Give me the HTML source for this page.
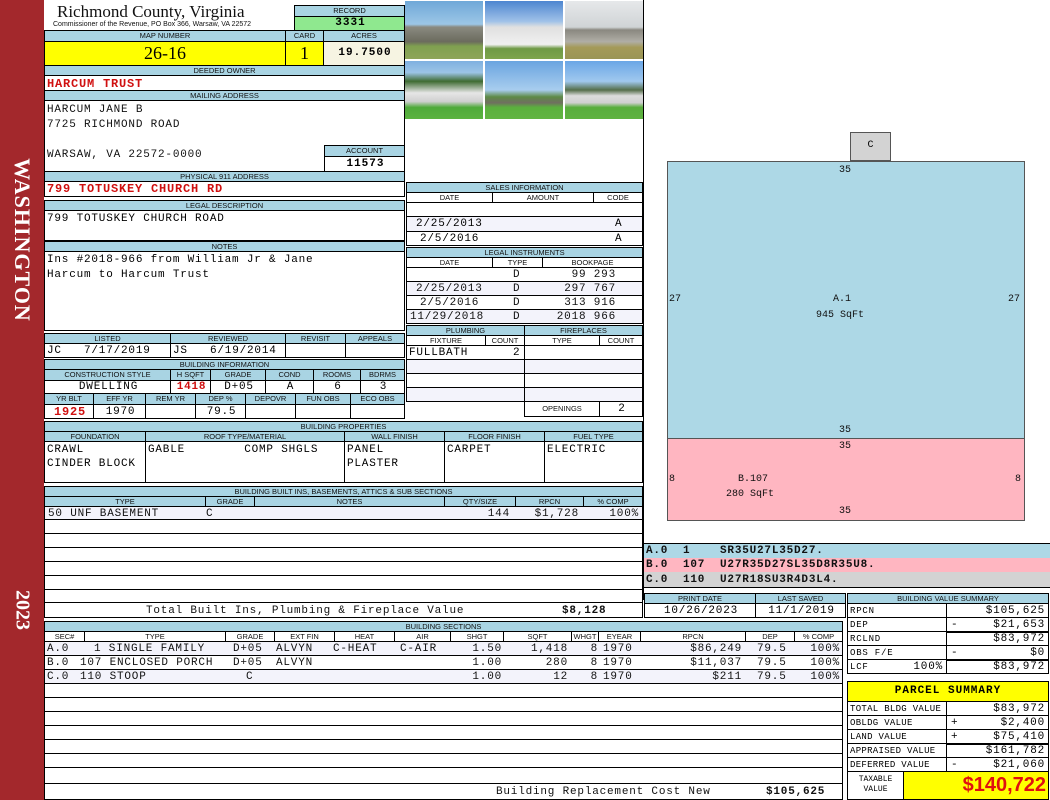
<!DOCTYPE html>
<html><head><meta charset="utf-8"><style>
*{margin:0;padding:0}
body{width:1050px;height:800px;background:#fff;position:relative;overflow:hidden;font-family:"Liberation Mono",monospace}
.c{position:absolute;box-sizing:border-box;border:1px solid #000;overflow:hidden;white-space:nowrap}
.h{background:#a9d4e3;font-family:"Liberation Sans",sans-serif;font-size:7.5px;text-align:center;line-height:9px;color:#111;letter-spacing:0}
.t{position:absolute;white-space:nowrap;font-size:11px;line-height:14px;color:#111;letter-spacing:0.8px}
.m{font-family:"Liberation Mono",monospace;font-size:11px;line-height:14px;padding-left:2px;letter-spacing:0.8px}
.r{color:#d01010;font-weight:bold}
.ctr{text-align:center}.rt{text-align:right;padding-right:3px}
.lav{background:#f3f3fb}
.ph{position:absolute;width:78px;height:58px}
.sg{position:absolute;left:4px}
</style></head><body>
<!-- sidebar -->
<div style="position:absolute;left:0;top:0;width:44px;height:800px;background:#a3282c"></div>
<div style="position:absolute;left:22px;top:240px;transform:translate(-50%,-50%) rotate(90deg);color:#fff;font-family:'Liberation Serif',serif;font-size:22px;font-weight:bold;letter-spacing:1px;white-space:nowrap">WASHINGTON</div>
<div style="position:absolute;left:22px;top:610px;transform:translate(-50%,-50%) rotate(90deg);color:#fff;font-family:'Liberation Serif',serif;font-size:20px;font-weight:bold">2023</div>

<!-- title -->
<div class="t" style="left:57px;top:2px;font-family:'Liberation Serif',serif;font-size:17px;line-height:20px;letter-spacing:0">Richmond County, Virginia</div>
<div class="t" style="left:53px;top:20px;font-family:'Liberation Sans',sans-serif;font-size:7px;line-height:9px;letter-spacing:0">Commissioner of the Revenue, PO Box 366, Warsaw, VA 22572</div>
<div class="c h" style="left:294px;top:5px;width:111px;height:12px">RECORD</div>
<div class="c m ctr" style="left:294px;top:16px;width:111px;height:15px;background:#8fe88f;font-weight:bold;letter-spacing:1px;line-height:13px">3331</div>

<div class="c h" style="left:44px;top:30px;width:242px;height:12px">MAP NUMBER</div>
<div class="c h" style="left:285px;top:30px;width:39px;height:12px">CARD</div>
<div class="c h" style="left:323px;top:30px;width:82px;height:12px">ACRES</div>
<div class="c ctr" style="left:44px;top:41px;width:242px;height:25px;background:#ffff00;font-family:'Liberation Serif',serif;font-size:18px;line-height:22px">26-16</div>
<div class="c ctr" style="left:285px;top:41px;width:39px;height:25px;background:#ffff00;font-family:'Liberation Serif',serif;font-size:18px;line-height:22px">1</div>
<div class="c m ctr" style="left:323px;top:41px;width:82px;height:25px;background:#f6f4e2;font-weight:bold;line-height:22px;letter-spacing:1px">19.7500</div>

<div class="c h" style="left:44px;top:65px;width:361px;height:11px">DEEDED OWNER</div>
<div class="c m r" style="left:44px;top:75px;width:361px;height:16px;font-size:12px;line-height:16px">HARCUM TRUST</div>
<div class="c h" style="left:44px;top:90px;width:361px;height:11px">MAILING ADDRESS</div>
<div class="c" style="left:44px;top:100px;width:361px;height:72px"></div>
<div class="t" style="left:47px;top:103px">HARCUM JANE B</div>
<div class="t" style="left:47px;top:118px">7725 RICHMOND ROAD</div>
<div class="t" style="left:47px;top:148px">WARSAW, VA 22572-0000</div>
<div class="c h" style="left:324px;top:145px;width:81px;height:12px">ACCOUNT</div>
<div class="c m ctr" style="left:324px;top:156px;width:81px;height:16px;font-weight:bold;letter-spacing:1px">11573</div>
<div class="c h" style="left:44px;top:171px;width:361px;height:11px">PHYSICAL 911 ADDRESS</div>
<div class="c m r" style="left:44px;top:181px;width:361px;height:16px;font-size:12px;line-height:15px">799 TOTUSKEY CHURCH RD</div>

<div class="c h" style="left:44px;top:200px;width:361px;height:11px">LEGAL DESCRIPTION</div>
<div class="c m" style="left:44px;top:210px;width:361px;height:31px;padding-top:1px">799 TOTUSKEY CHURCH ROAD</div>
<div class="c h" style="left:44px;top:241px;width:361px;height:11px">NOTES</div>
<div class="c m" style="left:44px;top:251px;width:361px;height:80px;line-height:15px;padding-top:1px">Ins #2018-966 from William Jr &amp; Jane<br>Harcum to Harcum Trust</div>

<!-- listed -->
<div class="c h" style="left:44px;top:333px;width:127px;height:11px">LISTED</div>
<div class="c h" style="left:170px;top:333px;width:116px;height:11px">REVIEWED</div>
<div class="c h" style="left:285px;top:333px;width:61px;height:11px">REVISIT</div>
<div class="c h" style="left:345px;top:333px;width:60px;height:11px">APPEALS</div>
<div class="c m" style="left:44px;top:343px;width:127px;height:15px">JC &nbsp;&nbsp;7/17/2019</div>
<div class="c m" style="left:170px;top:343px;width:116px;height:15px">JS &nbsp;&nbsp;6/19/2014</div>
<div class="c" style="left:285px;top:343px;width:61px;height:15px"></div>
<div class="c" style="left:345px;top:343px;width:60px;height:15px"></div>

<div class="c h" style="left:44px;top:359px;width:361px;height:11px">BUILDING INFORMATION</div>
<div class="c h" style="left:44px;top:369px;width:127px;height:12px">CONSTRUCTION STYLE</div>
<div class="c h" style="left:170px;top:369px;width:41px;height:12px">H SQFT</div>
<div class="c h" style="left:210px;top:369px;width:56px;height:12px">GRADE</div>
<div class="c h" style="left:265px;top:369px;width:49px;height:12px">COND</div>
<div class="c h" style="left:313px;top:369px;width:48px;height:12px">ROOMS</div>
<div class="c h" style="left:360px;top:369px;width:45px;height:12px">BDRMS</div>
<div class="c m ctr" style="left:44px;top:380px;width:127px;height:14px;line-height:13px">DWELLING</div>
<div class="c m ctr r" style="left:170px;top:380px;width:41px;height:14px;line-height:13px">1418</div>
<div class="c m ctr" style="left:210px;top:380px;width:56px;height:14px;line-height:13px">D+05</div>
<div class="c m ctr" style="left:265px;top:380px;width:49px;height:14px;line-height:13px">A</div>
<div class="c m ctr" style="left:313px;top:380px;width:48px;height:14px;line-height:13px">6</div>
<div class="c m ctr" style="left:360px;top:380px;width:45px;height:14px;line-height:13px">3</div>
<div class="c h" style="left:44px;top:393px;width:50px;height:12px">YR BLT</div>
<div class="c h" style="left:93px;top:393px;width:53px;height:12px">EFF YR</div>
<div class="c h" style="left:145px;top:393px;width:51px;height:12px">REM YR</div>
<div class="c h" style="left:195px;top:393px;width:51px;height:12px">DEP %</div>
<div class="c h" style="left:245px;top:393px;width:51px;height:12px">DEPOVR</div>
<div class="c h" style="left:295px;top:393px;width:56px;height:12px">FUN OBS</div>
<div class="c h" style="left:350px;top:393px;width:55px;height:12px">ECO OBS</div>
<div class="c m ctr r" style="left:44px;top:404px;width:50px;height:15px;font-size:12px">1925</div>
<div class="c m ctr" style="left:93px;top:404px;width:53px;height:15px">1970</div>
<div class="c" style="left:145px;top:404px;width:51px;height:15px"></div>
<div class="c m ctr" style="left:195px;top:404px;width:51px;height:15px">79.5</div>
<div class="c" style="left:245px;top:404px;width:51px;height:15px"></div>
<div class="c" style="left:295px;top:404px;width:56px;height:15px"></div>
<div class="c" style="left:350px;top:404px;width:55px;height:15px"></div>

<!-- building properties -->
<div class="c h" style="left:44px;top:421px;width:599px;height:11px">BUILDING PROPERTIES</div>
<div class="c h" style="left:44px;top:431px;width:102px;height:11px">FOUNDATION</div>
<div class="c h" style="left:145px;top:431px;width:200px;height:11px">ROOF TYPE/MATERIAL</div>
<div class="c h" style="left:344px;top:431px;width:101px;height:11px">WALL FINISH</div>
<div class="c h" style="left:444px;top:431px;width:101px;height:11px">FLOOR FINISH</div>
<div class="c h" style="left:544px;top:431px;width:99px;height:11px">FUEL TYPE</div>
<div class="c m" style="left:44px;top:441px;width:102px;height:42px;line-height:14px;padding-top:1px">CRAWL<br>CINDER BLOCK</div>
<div class="c m" style="left:145px;top:441px;width:200px;height:42px;line-height:14px;padding-top:1px">GABLE &nbsp;&nbsp;&nbsp;&nbsp;&nbsp;&nbsp;&nbsp;COMP SHGLS</div>
<div class="c m" style="left:344px;top:441px;width:101px;height:42px;line-height:14px;padding-top:1px">PANEL<br>PLASTER</div>
<div class="c m" style="left:444px;top:441px;width:101px;height:42px;line-height:14px;padding-top:1px">CARPET</div>
<div class="c m" style="left:544px;top:441px;width:99px;height:42px;line-height:14px;padding-top:1px">ELECTRIC</div>

<!-- built ins -->
<div class="c h" style="left:44px;top:486px;width:599px;height:11px">BUILDING BUILT INS, BASEMENTS, ATTICS &amp; SUB SECTIONS</div>
<div class="c h" style="left:44px;top:496px;width:162px;height:11px">TYPE</div>
<div class="c h" style="left:205px;top:496px;width:50px;height:11px">GRADE</div>
<div class="c h" style="left:254px;top:496px;width:191px;height:11px">NOTES</div>
<div class="c h" style="left:444px;top:496px;width:72px;height:11px">QTY/SIZE</div>
<div class="c h" style="left:515px;top:496px;width:69px;height:11px">RPCN</div>
<div class="c h" style="left:583px;top:496px;width:60px;height:11px">% COMP</div>
<div class="c" style="left:44px;top:506px;width:599px;height:97px"></div>
<div class="lav" style="position:absolute;left:45px;top:507px;width:597px;height:13px"></div>
<div class="t" style="left:48px;top:507px">50 UNF BASEMENT</div>
<div class="t" style="left:206px;top:507px">C</div>
<div class="t" style="left:444px;top:507px;width:66px;text-align:right">144</div>
<div class="t" style="left:515px;top:507px;width:64px;text-align:right">$1,728</div>
<div class="t" style="left:583px;top:507px;width:56px;text-align:right">100%</div>
<div style="position:absolute;left:44px;top:519px;width:599px;border-top:1px solid #000"></div>
<div style="position:absolute;left:44px;top:533px;width:599px;border-top:1px solid #000"></div>
<div style="position:absolute;left:44px;top:547px;width:599px;border-top:1px solid #000"></div>
<div style="position:absolute;left:44px;top:561px;width:599px;border-top:1px solid #000"></div>
<div style="position:absolute;left:44px;top:575px;width:599px;border-top:1px solid #000"></div>
<div style="position:absolute;left:44px;top:589px;width:599px;border-top:1px solid #000"></div>
<div class="c" style="left:44px;top:602px;width:599px;height:16px"></div>
<div class="t" style="left:146px;top:604px">Total Built Ins, Plumbing &amp; Fireplace Value</div>
<div class="t" style="left:562px;top:604px;font-weight:bold">$8,128</div>

<!-- photos -->
<div class="ph" style="left:405px;top:1px;background:linear-gradient(#6fa8d8 0%,#9cc6e6 40%,#8a8a80 45%,#6b6b5e 70%,#7fa050 78%,#8ea55a)"></div>
<div class="ph" style="left:485px;top:1px;background:linear-gradient(#4d86d0 0%,#9fc1e8 35%,#e0e0e0 45%,#f0f0f0 75%,#6e9a45 82%,#7ea54d)"></div>
<div class="ph" style="left:565px;top:1px;background:linear-gradient(#e6e8ea 0%,#d0d4d6 45%,#8a8880 50%,#b0aea6 70%,#a49a58 80%,#9a9555)"></div>
<div class="ph" style="left:405px;top:61px;background:linear-gradient(#7fb0e0 0%,#9cc4e6 20%,#3f6b32 35%,#e6e6e6 55%,#cfcfcf 70%,#4faa3a 80%,#5cb340)"></div>
<div class="ph" style="left:485px;top:61px;background:linear-gradient(#6aa4e0 0%,#a8cdee 50%,#5d8a45 62%,#707060 72%,#5bb03d 80%,#62b442)"></div>
<div class="ph" style="left:565px;top:61px;background:linear-gradient(#6aa6e6 0%,#a0c8ee 35%,#556e4a 50%,#dcdcdc 60%,#d0d0d0 72%,#58ad3c 80%,#5fb240)"></div>

<!-- sales -->
<div class="c h" style="left:406px;top:182px;width:237px;height:11px">SALES INFORMATION</div>
<div class="c h" style="left:406px;top:192px;width:87px;height:11px;background:#fff">DATE</div>
<div class="c h" style="left:492px;top:192px;width:102px;height:11px;background:#fff">AMOUNT</div>
<div class="c h" style="left:593px;top:192px;width:50px;height:11px;background:#fff">CODE</div>
<div class="c" style="left:406px;top:202px;width:237px;height:15px"></div>
<div class="c m lav" style="left:406px;top:216px;width:237px;height:16px;padding-left:9px;line-height:15px">2/25/2013<span style="position:absolute;left:208px">A</span></div>
<div class="c m" style="left:406px;top:231px;width:237px;height:15px;padding-left:13px">2/5/2016<span style="position:absolute;left:208px">A</span></div>

<div class="c h" style="left:406px;top:247px;width:237px;height:11px">LEGAL INSTRUMENTS</div>
<div class="c h" style="left:406px;top:257px;width:87px;height:11px;background:#fff">DATE</div>
<div class="c h" style="left:492px;top:257px;width:51px;height:11px;background:#fff">TYPE</div>
<div class="c h" style="left:542px;top:257px;width:101px;height:11px;background:#fff">BOOKPAGE</div>
<div class="c" style="left:406px;top:267px;width:237px;height:15px"></div>
<div class="c lav" style="left:406px;top:281px;width:237px;height:15px"></div>
<div class="c" style="left:406px;top:295px;width:237px;height:15px"></div>
<div class="c lav" style="left:406px;top:309px;width:237px;height:15px"></div>
<div class="t" style="left:513px;top:268px">D</div><div class="t" style="left:542px;top:268px;width:74px;text-align:right">99 293</div>
<div class="t" style="left:416px;top:282px">2/25/2013</div><div class="t" style="left:513px;top:282px">D</div><div class="t" style="left:542px;top:282px;width:74px;text-align:right">297 767</div>
<div class="t" style="left:420px;top:296px">2/5/2016</div><div class="t" style="left:513px;top:296px">D</div><div class="t" style="left:542px;top:296px;width:74px;text-align:right">313 916</div>
<div class="t" style="left:410px;top:310px">11/29/2018</div><div class="t" style="left:513px;top:310px">D</div><div class="t" style="left:542px;top:310px;width:74px;text-align:right">2018 966</div>

<!-- plumbing / fireplaces -->
<div class="c h" style="left:406px;top:325px;width:119px;height:11px">PLUMBING</div>
<div class="c h" style="left:524px;top:325px;width:119px;height:11px">FIREPLACES</div>
<div class="c h" style="left:406px;top:335px;width:80px;height:11px;background:#fff">FIXTURE</div>
<div class="c h" style="left:485px;top:335px;width:40px;height:11px;background:#fff">COUNT</div>
<div class="c h" style="left:524px;top:335px;width:76px;height:11px;background:#fff">TYPE</div>
<div class="c h" style="left:599px;top:335px;width:44px;height:11px;background:#fff">COUNT</div>
<div class="c m" style="left:406px;top:345px;width:119px;height:15px">FULLBATH<span style="position:absolute;left:106px">2</span></div>
<div class="c lav" style="left:406px;top:359px;width:119px;height:15px"></div>
<div class="c" style="left:406px;top:373px;width:119px;height:15px"></div>
<div class="c lav" style="left:406px;top:387px;width:119px;height:15px"></div>
<div class="c" style="left:524px;top:345px;width:119px;height:15px"></div>
<div class="c lav" style="left:524px;top:359px;width:119px;height:15px"></div>
<div class="c" style="left:524px;top:373px;width:119px;height:15px"></div>
<div class="c lav" style="left:524px;top:387px;width:119px;height:15px"></div>
<div class="c h" style="left:524px;top:401px;width:76px;height:16px;background:#fff;line-height:14px">OPENINGS</div>
<div class="c m ctr" style="left:599px;top:401px;width:44px;height:16px">2</div>

<!-- sketch -->
<div style="position:absolute;left:643px;top:0;width:1px;height:600px;background:#000"></div>
<div style="position:absolute;left:850px;top:132px;width:41px;height:29px;background:#d3d3d3;border:1px solid #555;box-sizing:border-box;font-size:10px;text-align:center;line-height:26px">C</div>
<div style="position:absolute;left:667px;top:161px;width:358px;height:278px;background:#add8e6;border:1px solid #555;box-sizing:border-box"></div>
<div style="position:absolute;left:667px;top:438px;width:358px;height:83px;background:#ffb6c1;border:1px solid #555;box-sizing:border-box"></div>
<div class="t" style="left:839px;top:164px;font-size:10px;letter-spacing:0">35</div>
<div class="t" style="left:669px;top:293px;font-size:10px;letter-spacing:0">27</div>
<div class="t" style="left:1008px;top:293px;font-size:10px;letter-spacing:0">27</div>
<div class="t" style="left:833px;top:293px;font-size:10px;letter-spacing:0">A.1</div>
<div class="t" style="left:816px;top:309px;font-size:10px;letter-spacing:0">945 SqFt</div>
<div class="t" style="left:839px;top:424px;font-size:10px;letter-spacing:0">35</div>
<div class="t" style="left:839px;top:440px;font-size:10px;letter-spacing:0">35</div>
<div class="t" style="left:669px;top:473px;font-size:10px;letter-spacing:0">8</div>
<div class="t" style="left:1015px;top:473px;font-size:10px;letter-spacing:0">8</div>
<div class="t" style="left:738px;top:473px;font-size:10px;letter-spacing:0">B.107</div>
<div class="t" style="left:726px;top:488px;font-size:10px;letter-spacing:0">280 SqFt</div>
<div class="t" style="left:839px;top:505px;font-size:10px;letter-spacing:0">35</div>

<div style="position:absolute;left:644px;top:543px;width:406px;height:15px;background:#add8e6;border-top:1px solid #000"></div>
<div style="position:absolute;left:644px;top:558px;width:406px;height:14px;background:#ffb6c1"></div>
<div style="position:absolute;left:644px;top:572px;width:406px;height:15px;background:#d3d3d3;border-bottom:1px solid #000"></div>
<div class="t" style="left:646px;top:544px;font-weight:bold">A.0 &nbsp;1 &nbsp;&nbsp;&nbsp;SR35U27L35D27.</div>
<div class="t" style="left:646px;top:558px;font-weight:bold">B.0 &nbsp;107 &nbsp;U27R35D27SL35D8R35U8.</div>
<div class="t" style="left:646px;top:573px;font-weight:bold">C.0 &nbsp;110 &nbsp;U27R18SU3R4D3L4.</div>

<!-- print date -->
<div class="c h" style="left:644px;top:593px;width:112px;height:11px">PRINT DATE</div>
<div class="c h" style="left:755px;top:593px;width:91px;height:11px">LAST SAVED</div>
<div class="c m ctr" style="left:644px;top:603px;width:112px;height:15px">10/26/2023</div>
<div class="c m ctr" style="left:755px;top:603px;width:91px;height:15px">11/1/2019</div>

<!-- building value summary -->
<div class="c h" style="left:847px;top:593px;width:202px;height:11px">BUILDING VALUE SUMMARY</div>
<div class="c m" style="left:847px;top:603px;width:100px;height:15px;font-size:9px">RPCN</div>
<div class="c m rt" style="left:946px;top:603px;width:103px;height:15px">$105,625</div>
<div class="c m" style="left:847px;top:617px;width:100px;height:15px;font-size:9px">DEP</div>
<div class="c m rt" style="left:946px;top:617px;width:103px;height:15px"><span class="sg">-</span>$21,653</div>
<div class="c m" style="left:847px;top:631px;width:100px;height:15px;font-size:9px">RCLND</div>
<div class="c m rt" style="left:946px;top:631px;width:103px;height:15px;border-top-width:2px;line-height:12px">$83,972</div>
<div class="c m" style="left:847px;top:645px;width:100px;height:15px;font-size:9px">OBS F/E</div>
<div class="c m rt" style="left:946px;top:645px;width:103px;height:15px"><span class="sg">-</span>$0</div>
<div class="c m" style="left:847px;top:659px;width:100px;height:15px;font-size:9px">LCF<span style="position:absolute;right:3px;font-size:11px">100%</span></div>
<div class="c m rt" style="left:946px;top:659px;width:103px;height:15px;border-top-width:2px;line-height:12px">$83,972</div>

<!-- parcel summary -->
<div class="c" style="left:847px;top:681px;width:202px;height:21px;background:#ffff00;font-family:'Liberation Mono',monospace;font-weight:bold;font-size:11px;text-align:center;line-height:19px;letter-spacing:1px">PARCEL SUMMARY</div>
<div class="c m" style="left:847px;top:701px;width:100px;height:15px;font-size:9px;letter-spacing:0.3px">TOTAL BLDG VALUE</div>
<div class="c m rt" style="left:946px;top:701px;width:103px;height:15px">$83,972</div>
<div class="c m" style="left:847px;top:715px;width:100px;height:15px;font-size:9px;letter-spacing:0.3px">OBLDG VALUE</div>
<div class="c m rt" style="left:946px;top:715px;width:103px;height:15px"><span class="sg">+</span>$2,400</div>
<div class="c m" style="left:847px;top:729px;width:100px;height:15px;font-size:9px;letter-spacing:0.3px">LAND VALUE</div>
<div class="c m rt" style="left:946px;top:729px;width:103px;height:15px"><span class="sg">+</span>$75,410</div>
<div class="c m" style="left:847px;top:743px;width:100px;height:15px;font-size:9px;letter-spacing:0.3px">APPRAISED VALUE</div>
<div class="c m rt" style="left:946px;top:743px;width:103px;height:15px;border-top-width:2px;line-height:12px">$161,782</div>
<div class="c m" style="left:847px;top:757px;width:100px;height:15px;font-size:9px;letter-spacing:0.3px">DEFERRED VALUE</div>
<div class="c m rt" style="left:946px;top:757px;width:103px;height:15px"><span class="sg">-</span>$21,060</div>
<div class="c ctr" style="left:847px;top:771px;width:57px;height:29px;font-family:'Liberation Mono',monospace;font-size:8px;line-height:10px;padding-top:3px">TAXABLE<br>VALUE</div>
<div class="c" style="left:903px;top:771px;width:146px;height:29px;background:#ffff00;color:#e01010;font-family:'Liberation Sans',sans-serif;font-weight:bold;font-size:20px;text-align:right;line-height:26px;padding-right:2px">$140,722</div>

<!-- building sections -->
<div class="c h" style="left:44px;top:621px;width:799px;height:11px">BUILDING SECTIONS</div>
<div class="c h" style="left:44px;top:631px;width:41px;height:11px;background:#fff">SEC#</div>
<div class="c h" style="left:84px;top:631px;width:142px;height:11px;background:#fff">TYPE</div>
<div class="c h" style="left:225px;top:631px;width:50px;height:11px;background:#fff">GRADE</div>
<div class="c h" style="left:274px;top:631px;width:61px;height:11px;background:#fff">EXT FIN</div>
<div class="c h" style="left:334px;top:631px;width:61px;height:11px;background:#fff">HEAT</div>
<div class="c h" style="left:394px;top:631px;width:57px;height:11px;background:#fff">AIR</div>
<div class="c h" style="left:450px;top:631px;width:54px;height:11px;background:#fff">SHGT</div>
<div class="c h" style="left:503px;top:631px;width:69px;height:11px;background:#fff">SQFT</div>
<div class="c h" style="left:571px;top:631px;width:28px;height:11px;background:#fff">WHGT</div>
<div class="c h" style="left:598px;top:631px;width:43px;height:11px;background:#fff">EYEAR</div>
<div class="c h" style="left:640px;top:631px;width:106px;height:11px;background:#fff">RPCN</div>
<div class="c h" style="left:745px;top:631px;width:50px;height:11px;background:#fff">DEP</div>
<div class="c h" style="left:794px;top:631px;width:49px;height:11px;background:#fff">% COMP</div>
<div class="c" style="left:44px;top:641px;width:799px;height:159px"></div>
<div class="lav" style="position:absolute;left:45px;top:642px;width:797px;height:13px"></div>
<div class="lav" style="position:absolute;left:45px;top:670px;width:797px;height:13px"></div>
<div style="position:absolute;left:44px;top:655px;width:799px;border-top:1px solid #000"></div>
<div style="position:absolute;left:44px;top:669px;width:799px;border-top:1px solid #000"></div>
<div style="position:absolute;left:44px;top:683px;width:799px;border-top:1px solid #000"></div>
<div style="position:absolute;left:44px;top:697px;width:799px;border-top:1px solid #000"></div>
<div style="position:absolute;left:44px;top:711px;width:799px;border-top:1px solid #000"></div>
<div style="position:absolute;left:44px;top:725px;width:799px;border-top:1px solid #000"></div>
<div style="position:absolute;left:44px;top:739px;width:799px;border-top:1px solid #000"></div>
<div style="position:absolute;left:44px;top:753px;width:799px;border-top:1px solid #000"></div>
<div style="position:absolute;left:44px;top:767px;width:799px;border-top:1px solid #000"></div>
<div style="position:absolute;left:44px;top:783px;width:799px;border-top:1px solid #000"></div>

<div class="t" style="left:47px;top:642px">A.0</div>
<div class="t" style="left:47px;top:656px">B.0</div>
<div class="t" style="left:47px;top:670px">C.0</div>
<div class="t" style="left:94px;top:642px">1 SINGLE FAMILY</div>
<div class="t" style="left:80px;top:656px">107 ENCLOSED PORCH</div>
<div class="t" style="left:80px;top:670px">110 STOOP</div>
<div class="t" style="left:233px;top:642px">D+05</div>
<div class="t" style="left:233px;top:656px">D+05</div>
<div class="t" style="left:246px;top:670px">C</div>
<div class="t" style="left:276px;top:642px">ALVYN</div>
<div class="t" style="left:276px;top:656px">ALVYN</div>
<div class="t" style="left:333px;top:642px">C-HEAT</div>
<div class="t" style="left:400px;top:642px">C-AIR</div>
<div class="t" style="left:450px;top:642px;width:52px;text-align:right">1.50</div>
<div class="t" style="left:450px;top:656px;width:52px;text-align:right">1.00</div>
<div class="t" style="left:450px;top:670px;width:52px;text-align:right">1.00</div>
<div class="t" style="left:503px;top:642px;width:65px;text-align:right">1,418</div>
<div class="t" style="left:503px;top:656px;width:65px;text-align:right">280</div>
<div class="t" style="left:503px;top:670px;width:65px;text-align:right">12</div>
<div class="t" style="left:571px;top:642px;width:27px;text-align:right">8</div>
<div class="t" style="left:571px;top:656px;width:27px;text-align:right">8</div>
<div class="t" style="left:571px;top:670px;width:27px;text-align:right">8</div>
<div class="t" style="left:603px;top:642px">1970</div>
<div class="t" style="left:603px;top:656px">1970</div>
<div class="t" style="left:603px;top:670px">1970</div>
<div class="t" style="left:640px;top:642px;width:102px;text-align:right">$86,249</div>
<div class="t" style="left:640px;top:656px;width:102px;text-align:right">$11,037</div>
<div class="t" style="left:640px;top:670px;width:102px;text-align:right">$211</div>
<div class="t" style="left:757px;top:642px">79.5</div>
<div class="t" style="left:757px;top:656px">79.5</div>
<div class="t" style="left:757px;top:670px">79.5</div>
<div class="t" style="left:794px;top:642px;width:46px;text-align:right">100%</div>
<div class="t" style="left:794px;top:656px;width:46px;text-align:right">100%</div>
<div class="t" style="left:794px;top:670px;width:46px;text-align:right">100%</div>
<div class="t" style="left:496px;top:785px">Building Replacement Cost New</div>
<div class="t" style="left:766px;top:785px;font-weight:bold">$105,625</div>
</body></html>
